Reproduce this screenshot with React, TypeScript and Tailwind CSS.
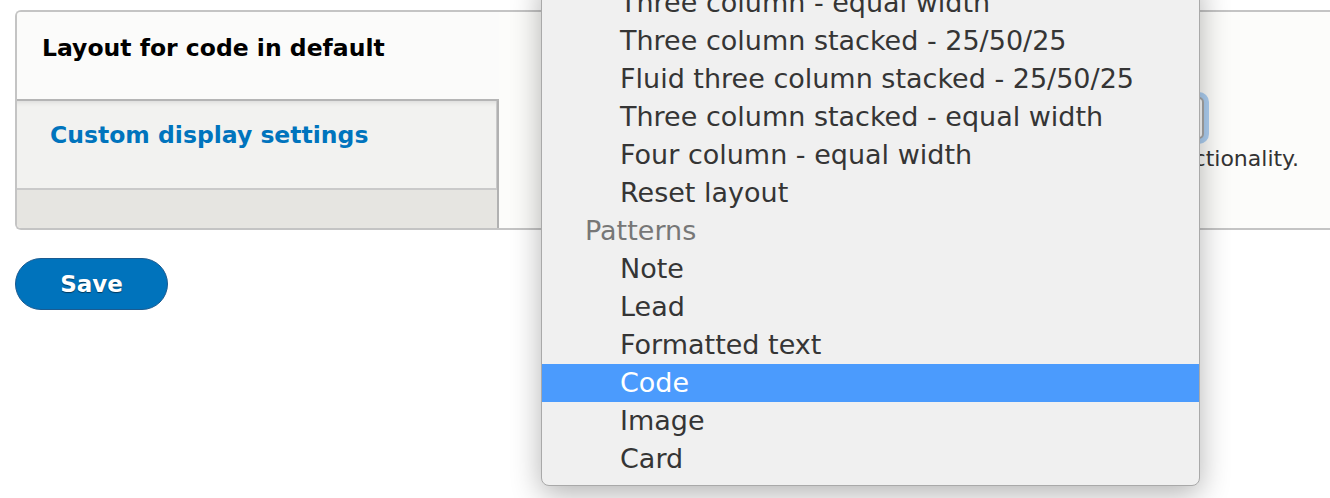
import React from "react";

const layoutOptions = [
  "Three column - equal width",
  "Three column stacked - 25/50/25",
  "Fluid three column stacked - 25/50/25",
  "Three column stacked - equal width",
  "Four column - equal width",
  "Reset layout",
];

const patternOptions = ["Note", "Lead", "Formatted text", "Code", "Image", "Card"];

const Dropdown = () => {
  return (
    <div className="absolute left-[541px] top-[-24px] w-[659px] rounded-b-[8px] border border-[#a9a9a9] bg-[#f0f0f0] pt-[7px] pb-[7px] text-[27px] leading-[38px] text-[#353535] shadow-[0_8px_30px_rgba(0,0,0,0.3)]">
      {layoutOptions.map((item) => (
        <div key={item} className="h-[38px] pl-[78px] whitespace-nowrap">
          {item}
        </div>
      ))}
      <div className="h-[38px] pl-[43px] text-[#777777]">Patterns</div>
      {patternOptions.map((item) => (
        <div
          key={item}
          className={
            item === "Code"
              ? "h-[38px] bg-[#4b9bfd] pl-[78px] text-white"
              : "h-[38px] pl-[78px]"
          }
        >
          {item}
        </div>
      ))}
    </div>
  );
};

export default function App() {
  return (
    <div className="relative h-[498px] w-[1330px] overflow-hidden bg-white font-['DejaVu_Sans',sans-serif]">
      <div className="pl-[15px] pt-[10px]">
        <div className="flex h-[220px] w-[1340px] overflow-hidden rounded-l-[6px] border-2 border-r-0 border-[#c4c4c4]">
          {/* vertical tabs */}
          <div className="flex w-[482px] shrink-0 flex-col border-r-2 border-[#b1b1b1] bg-[#e6e5e1]">
            <div className="relative -mr-[2px] h-[89px] border-b-2 border-[#b5b5b5] bg-[#fbfbfa] pl-[25px] pt-[22px] text-[23.5px] leading-[28px] font-bold text-black">
              Layout for code in default
            </div>
            <div className="h-[89px] border-r border-b-2 border-[#cacaca] bg-[#f2f2f0] pl-[33px] pt-[20px] text-[23.5px] leading-[28px] font-bold text-[#0074bd] shadow-[inset_0_6px_6px_-6px_rgba(0,0,0,0.15)]">
              Custom display settings
            </div>
            <div className="flex-1" />
          </div>

          {/* pane */}
          <div className="flex-1 bg-[#fcfcfa] pl-[80px] pt-[85px] text-[#333333]">
            <div className="h-[42px] w-[625px] rounded-[5px] border-2 border-[#a8a8a8] bg-white ring-[5px] ring-[#aed0f3]" />
            <p className="mt-[6px] w-[720px] text-right text-[22px] leading-[28px]">
              functionality.
            </p>
          </div>
        </div>

        <button className="mt-[28px] h-[52px] w-[153px] rounded-full border border-[#1b5b91] bg-[#0073bc] text-[23px] font-bold text-white [text-shadow:0_1px_1px_rgba(0,0,0,0.5)]">
          Save
        </button>
      </div>

      <Dropdown />
    </div>
  );
}
